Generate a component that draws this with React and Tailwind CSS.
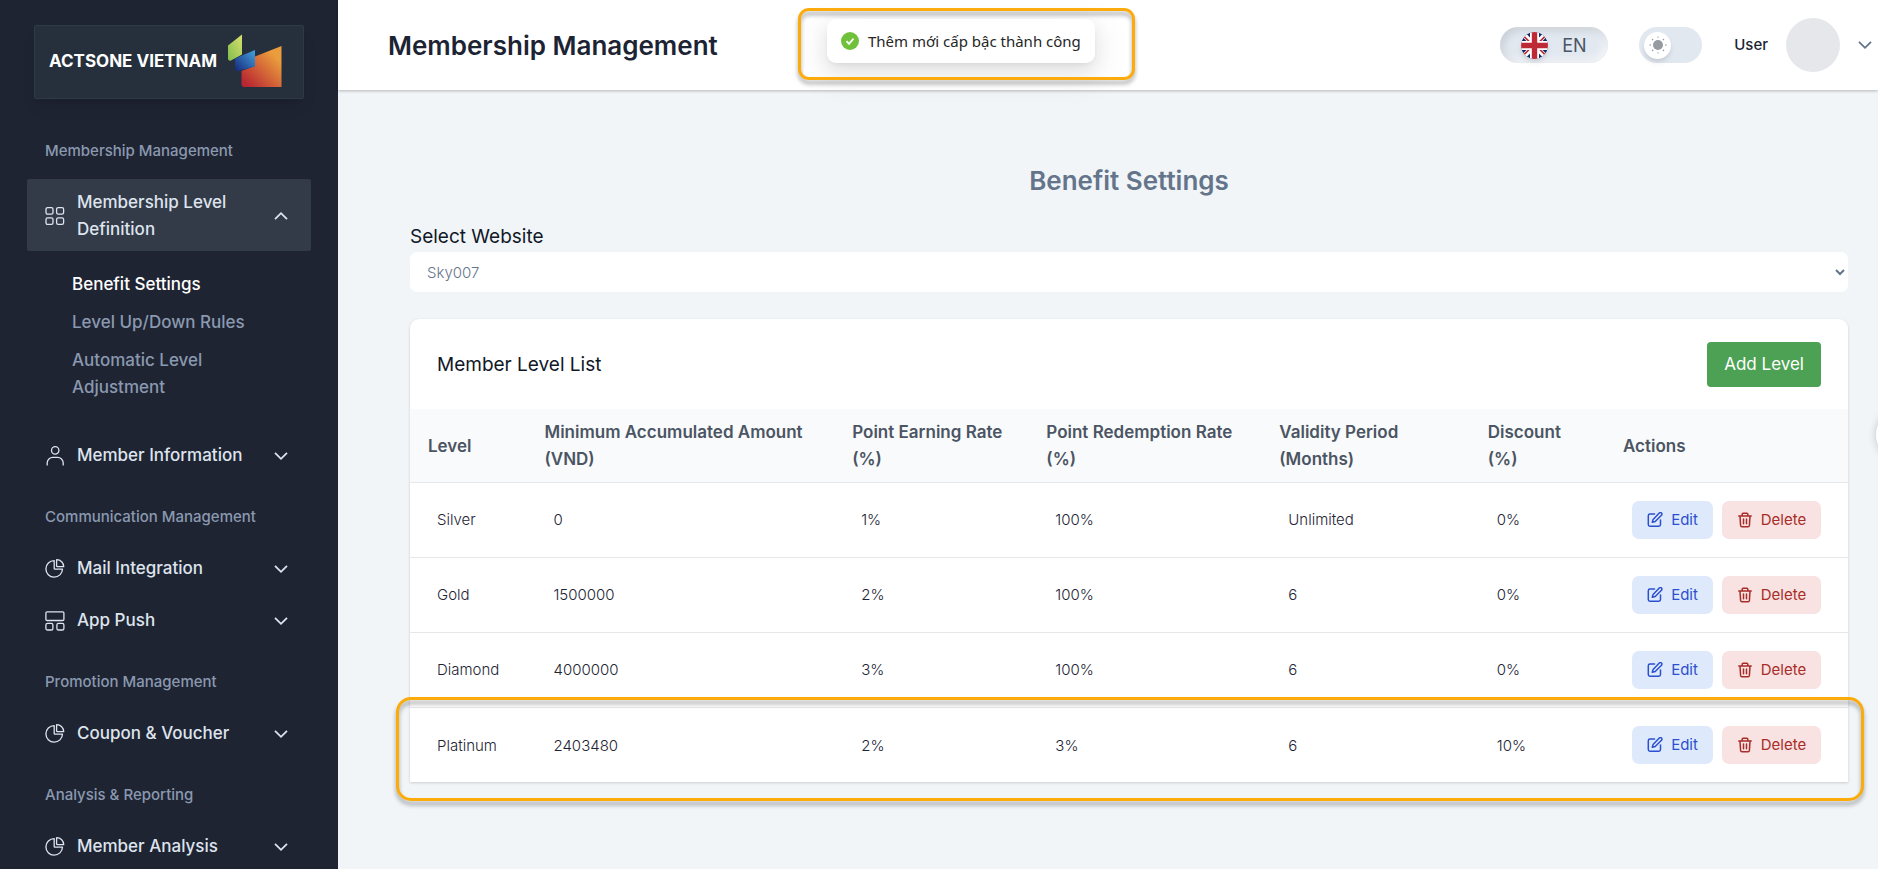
import React from "react";

function GridIcon() {
  return (
    <svg width="20" height="20" viewBox="0 0 20 20" fill="none" stroke="currentColor" strokeWidth="1.3" aria-hidden="true">
      <rect x="1" y="1.6" width="7" height="6.6" rx="1.6" />
      <rect x="11.6" y="1.6" width="7" height="6.6" rx="1.6" />
      <rect x="1" y="11.8" width="7" height="6.6" rx="1.6" />
      <rect x="11.6" y="11.8" width="7" height="6.6" rx="1.6" />
    </svg>
  );
}

function UserIcon() {
  return (
    <svg width="20" height="20" viewBox="0 0 20 20" fill="none" stroke="currentColor" strokeWidth="1.3" aria-hidden="true">
      <circle cx="10.2" cy="4.4" r="3.7" />
      <path d="M2.2 19.4v-2.6a5.6 5.6 0 0 1 5.6-5.4h4.8a5.6 5.6 0 0 1 5.6 5.4v2.6" />
    </svg>
  );
}

function PieIcon() {
  return (
    <svg width="20" height="20" viewBox="0 0 20 20" fill="none" stroke="currentColor" strokeWidth="1.3" strokeLinejoin="round" aria-hidden="true">
      <path d="M9.2 1.6a8.3 8.3 0 1 0 8.3 8.5H9.900a.7.7 0 0 1-.7-.7z" />
      <path d="M11.6.7v6.3c0 .4.3.7.7.7h6.4c0-3.900-3-7-7.100-7z" />
    </svg>
  );
}

function LayoutIcon() {
  return (
    <svg width="20" height="20" viewBox="0 0 20 20" fill="none" stroke="currentColor" strokeWidth="1.3" aria-hidden="true">
      <rect x="0.9" y="0.9" width="18" height="8.6" rx="1.2" />
      <rect x="0.9" y="12.4" width="7" height="6.6" rx="1.6" />
      <rect x="11.9" y="12.4" width="7" height="6.6" rx="1.6" />
    </svg>
  );
}

function Chevron({ up }) {
  return (
    <svg width="16" height="10" viewBox="0 0 16 10" fill="none" stroke="currentColor" strokeWidth="1.8" aria-hidden="true">
      <path d={up ? "M2 8.200 8 2.200l6 6" : "M2 1.800 8 7.800l6-6"} />
    </svg>
  );
}

function Logo() {
  return (
    <svg width="54" height="53" viewBox="0 0 54 53" aria-hidden="true">
      <defs>
        <linearGradient id="lg" x1="0" y1="1" x2="1" y2="0">
          <stop offset="0" stopColor="#80bd4f" />
          <stop offset="1" stopColor="#dbe06c" />
        </linearGradient>
        <linearGradient id="lb" x1="0" y1="1" x2="1" y2="0">
          <stop offset="0" stopColor="#16267a" />
          <stop offset="1" stopColor="#43a3dd" />
        </linearGradient>
        <linearGradient id="lo" x1="0" y1="1" x2="1" y2="0">
          <stop offset="0.1" stopColor="#b92832" />
          <stop offset="0.8" stopColor="#eb9c3c" />
        </linearGradient>
      </defs>
      <path d="M27 22.500 53.500 12v41H17a3.500 3.500 0 0 1-3.500-3.500V37l13.500-5z" fill="url(#lo)" />
      <path d="M0 11.500 14 .5v20L3 26.500c-1.800.6-3-.4-3-2z" fill="url(#lg)" />
      <path d="M7 24.500 27 16v16.500L10 37c-1.800.4-3-.8-3-2.500z" fill="url(#lb)" />
    </svg>
  );
}

function Flag() {
  return (
    <svg width="27" height="27" viewBox="0 0 60 60" className="rounded-full shadow-md" aria-hidden="true">
      <clipPath id="flagc"><circle cx="30" cy="30" r="30" /></clipPath>
      <g clipPath="url(#flagc)">
        <path fill="#12296b" d="M0 0h60v60H0z" />
        <path stroke="#fff" strokeWidth="11" d="m0 0 60 60M60 0 0 60" />
        <path stroke="#bd2a36" strokeWidth="3.5" d="m5 8 20 20M55 8 35 28M5 52l20-20M55 52 35 32" />
        <path stroke="#fff" strokeWidth="20" d="M30 0v60M0 30h60" />
        <path stroke="#bd2a36" strokeWidth="12" d="M30 0v60M0 30h60" />
      </g>
    </svg>
  );
}

function Sun() {
  return (
    <svg width="18" height="18" viewBox="0 0 18 18" fill="#969aa1" aria-hidden="true">
      <circle cx="9" cy="9" r="5" />
      <circle cx="9" cy="1.2" r="0.9" opacity=".5" />
      <circle cx="9" cy="16.8" r="0.9" opacity=".5" />
      <circle cx="1.2" cy="9" r="0.8" />
      <circle cx="16.8" cy="9" r="0.8" />
      <circle cx="3.6" cy="3.6" r="0.8" />
      <circle cx="14.4" cy="3.6" r="0.8" />
      <circle cx="3.6" cy="14.4" r="0.8" />
      <circle cx="14.4" cy="14.4" r="0.8" />
    </svg>
  );
}

function EditIcon() {
  return (
    <svg width="16" height="16" viewBox="0 0 16 16" fill="none" stroke="currentColor" strokeWidth="1.5" strokeLinejoin="round" strokeLinecap="round" aria-hidden="true">
      <path d="M7.500 2H3A1.700 1.700 0 0 0 1.300 3.700V12.500A1.700 1.700 0 0 0 3 14.200h8.800a1.700 1.700 0 0 0 1.700-1.700V8.100" />
      <path d="M12.300 1a1.500 1.500 0 0 1 2.200 2.200L8.200 9.500l-2.900.8.800-2.900z" />
    </svg>
  );
}

function TrashIcon() {
  return (
    <svg width="16" height="16" viewBox="0 0 16 16" fill="none" stroke="currentColor" strokeWidth="1.5" strokeLinejoin="round" strokeLinecap="round" aria-hidden="true">
      <path d="M1.800 3.900h12.400M5.200 3.700V2.200c0-.6.4-1 1-1h3.600c.6 0 1 .4 1 1v1.500M3 4.200l.6 9.300c.1.800.6 1.300 1.400 1.300h6c.8 0 1.300-.5 1.400-1.300l.6-9.300M6.500 7v4.800M9.500 7v4.800" />
    </svg>
  );
}

function NavItem({ icon, label, open }) {
  return (
    <button
      type="button"
      aria-expanded={!!open}
      className={
        "flex w-full items-center gap-3 rounded-xs pt-[10px] pr-[22px] pb-2 pl-[18px] text-left text-[17px] leading-[27px] font-medium text-[#dee4ee] " +
        (open ? "bg-[#333a48]" : "")
      }
    >
      <span className="shrink-0">{icon}</span>
      <span className="flex-1">{label}</span>
      <Chevron up={open} />
    </button>
  );
}

function GroupLabel({ children }) {
  return <h3 className="mb-[15px] pl-[18px] text-[15px] leading-[27px] font-medium text-[#8a99af]">{children}</h3>;
}

function Sidebar() {
  return (
    <aside className="w-[338px] shrink-0 overflow-hidden bg-[#1f2433] px-[27px] pt-[25px]">
      <a href="#home" className="mx-[7px] flex h-[74px] items-center gap-[11px] rounded-xs border border-[#2e3a47] bg-[#26303d] pb-1 pl-[14px] shadow-lg">
        <span className="pt-1 text-[17px] font-bold whitespace-nowrap text-white">ACTSONE VIETNAM</span>
        <Logo />
      </a>
      <nav className="mt-[38px] flex flex-col gap-[26px]">
        <div>
          <GroupLabel>Membership Management</GroupLabel>
          <NavItem icon={<GridIcon />} label="Membership Level Definition" open />
          <ul className="mt-5 mb-[31px] flex flex-col gap-[11px] pr-20 pl-[45px] text-[17px] leading-[27px] font-medium text-[#8a99af]">
            <li><a href="#benefits" className="text-white">Benefit Settings</a></li>
            <li><a href="#rules" className="whitespace-nowrap">Level Up/Down Rules</a></li>
            <li><a href="#auto">Automatic Level Adjustment</a></li>
          </ul>
          <NavItem icon={<UserIcon />} label="Member Information" />
        </div>
        <div>
          <GroupLabel>Communication Management</GroupLabel>
          <div className="flex flex-col gap-[7px]">
            <NavItem icon={<PieIcon />} label="Mail Integration" />
            <NavItem icon={<LayoutIcon />} label="App Push" />
          </div>
        </div>
        <div>
          <GroupLabel>Promotion Management</GroupLabel>
          <NavItem icon={<PieIcon />} label="Coupon & Voucher" />
        </div>
        <div>
          <GroupLabel>Analysis & Reporting</GroupLabel>
          <NavItem icon={<PieIcon />} label="Member Analysis" />
        </div>
      </nav>
    </aside>
  );
}

function Header() {
  return (
    <header className="relative flex h-[90px] shrink-0 items-center bg-white pr-[5px] pl-[50px] shadow-[0_1px_3px_rgba(0,0,0,0.25)]">
      <h1 className="flex-1 text-[26px] font-semibold text-[#1c2434]">Membership Management</h1>
      <button type="button" className="mr-[31px] flex h-9 w-[108px] items-center gap-3.5 rounded-full bg-[#e2e8f0] pl-[21px] text-[18px] text-[#4b5563] shadow-[inset_3px_3px_8px_rgba(0,0,0,0.12),inset_-3px_-3px_8px_rgba(255,255,255,0.7)]">
        <Flag />
        EN
      </button>
      <button type="button" role="switch" aria-checked="false" aria-label="Dark mode" className="mr-8 flex h-9 w-[63px] items-center rounded-full bg-[#e2e8f0] pl-[5px]">
        <span className="flex size-[27px] items-center justify-center rounded-full bg-white shadow-md"><Sun /></span>
      </button>
      <button type="button" className="flex items-center text-[#64748b]">
        <span className="mr-[18px] text-[15px] font-medium text-[#1c2434]">User</span>
        <span className="mr-[17px] size-[54px] rounded-full bg-[#e5e7eb]" />
        <Chevron />
      </button>
    </header>
  );
}

function Toast() {
  return (
    <div className="absolute top-2 left-[798px] z-20 h-[72px] w-[337px]">
      <div role="status" className="absolute top-[11px] left-[29px] flex h-11 items-center gap-[9px] rounded-[9px] bg-white px-3.5 font-['Noto_Sans',sans-serif] text-[15px] whitespace-nowrap text-[#262626] shadow-[0_7px_18px_0_rgba(0,0,0,0.08),0_3px_7px_-4px_rgba(0,0,0,0.12),0_10px_32px_9px_rgba(0,0,0,0.05)]">
        <svg width="18" height="18" viewBox="0 0 18 18" aria-hidden="true">
          <circle cx="9" cy="9" r="9" fill="#6fc13c" />
          <path d="m5.500 9.200 2.500 2.700 4.500-5.300" fill="none" stroke="#fff" strokeWidth="1.7" />
        </svg>
        Thêm mới cấp bậc thành công
      </div>
      <div className="absolute inset-0 rounded-[11px] border-3 border-[#fbab0a] drop-shadow-[0_4px_2px_rgba(0,0,0,0.35)]" />
    </div>
  );
}

const columns = [
  ["Level", "w-[8.1%]"],
  ["Minimum Accumulated Amount (VND)", "w-[21.4%]"],
  ["Point Earning Rate (%)", "w-[13.5%]"],
  ["Point Redemption Rate (%)", "w-[16.2%]"],
  ["Validity Period (Months)", "w-[14.5%]"],
  ["Discount (%)", "w-[9.4%]"],
  ["Actions", "w-[16.9%]"],
];

const rows = [
  ["Silver", "0", "1%", "100%", "Unlimited", "0%"],
  ["Gold", "1500000", "2%", "100%", "6", "0%"],
  ["Diamond", "4000000", "3%", "100%", "6", "0%"],
  ["Platinum", "2403480", "2%", "3%", "6", "10%"],
];

function LevelCard() {
  return (
    <section className="relative mt-[27px] rounded-t-[9px] bg-white shadow-[0_1px_3px_rgba(0,0,0,0.16)]">
      <div className="flex h-[90px] items-center justify-between px-[27px]">
        <h3 className="pt-0.5 text-[19px] text-[#111827]">Member Level List</h3>
        <button type="button" className="h-[45px] rounded-[4px] bg-[#4ca154] px-[17px] pt-0.5 text-[17px] text-white">Add Level</button>
      </div>
      <table className="w-full table-fixed border-collapse text-left">
        <thead className="bg-[#f9fafb] text-[17px] leading-[27px] text-[#4b5563]">
          <tr className="h-[73px] border-b border-[#e5e7eb]">
            {columns.map(([name, width]) => (
              <th key={name} scope="col" className={"px-[18px] pt-[10px] pb-2 font-semibold " + width}>{name}</th>
            ))}
          </tr>
        </thead>
        <tbody className="text-[15px] font-light text-[#1c2434]">
          {rows.map((row) => (
            <tr key={row[0]} className="h-[75px] border-b border-[#e5e7eb] last:border-b-0">
              {row.map((value, i) => (
                <td key={i} className="px-[27px] pt-0.5 whitespace-nowrap">{value}</td>
              ))}
              <td className="px-[27px]">
                <div className="flex justify-end gap-[9px] font-normal">
                  <button type="button" className="flex h-[38px] w-[81px] items-center justify-center gap-2 rounded-[7px] bg-[#dee9fc] pt-px text-[#2b50cf]">
                    <EditIcon />Edit
                  </button>
                  <button type="button" className="flex h-[38px] w-[99px] items-center justify-center gap-2 rounded-[7px] bg-[#f8e2e2] pt-px text-[#a82d28]">
                    <TrashIcon />Delete
                  </button>
                </div>
              </td>
            </tr>
          ))}
        </tbody>
      </table>
      <div className="pointer-events-none absolute -right-4 -bottom-[19px] -left-3.5 h-[104px] rounded-[15px] border-3 border-[#fbab0a] drop-shadow-[0_4px_2px_rgba(0,0,0,0.35)]" />
    </section>
  );
}

export default function App() {
  return (
    <div className="relative flex h-screen overflow-hidden bg-[#f1f5f8] font-[Inter,sans-serif]">
      <Sidebar />
      <div className="flex min-w-0 flex-1 flex-col">
        <Header />
        <main className="flex-1 pt-[73px] pr-[30px] pl-[72px]">
          <h2 className="text-center text-[26px] leading-9 font-semibold text-[#64748b]">Benefit Settings</h2>
          <label htmlFor="site" className="mt-[23px] block text-[19px] leading-[30px] text-[#111827]">Select Website</label>
          <select id="site" defaultValue="Sky007" className="block h-10 w-full rounded-[7px] bg-white px-[13px] text-[15px] font-light text-[#64748b]">
            <option>Sky007</option>
          </select>
          <LevelCard />
        </main>
      </div>
      <Toast />
      <button type="button" aria-label="Open panel" className="absolute top-[408px] left-[calc(100%-2px)] size-[54px] rounded-full bg-white shadow-[0_0_9px_rgba(0,0,0,0.2)]" />
    </div>
  );
}
